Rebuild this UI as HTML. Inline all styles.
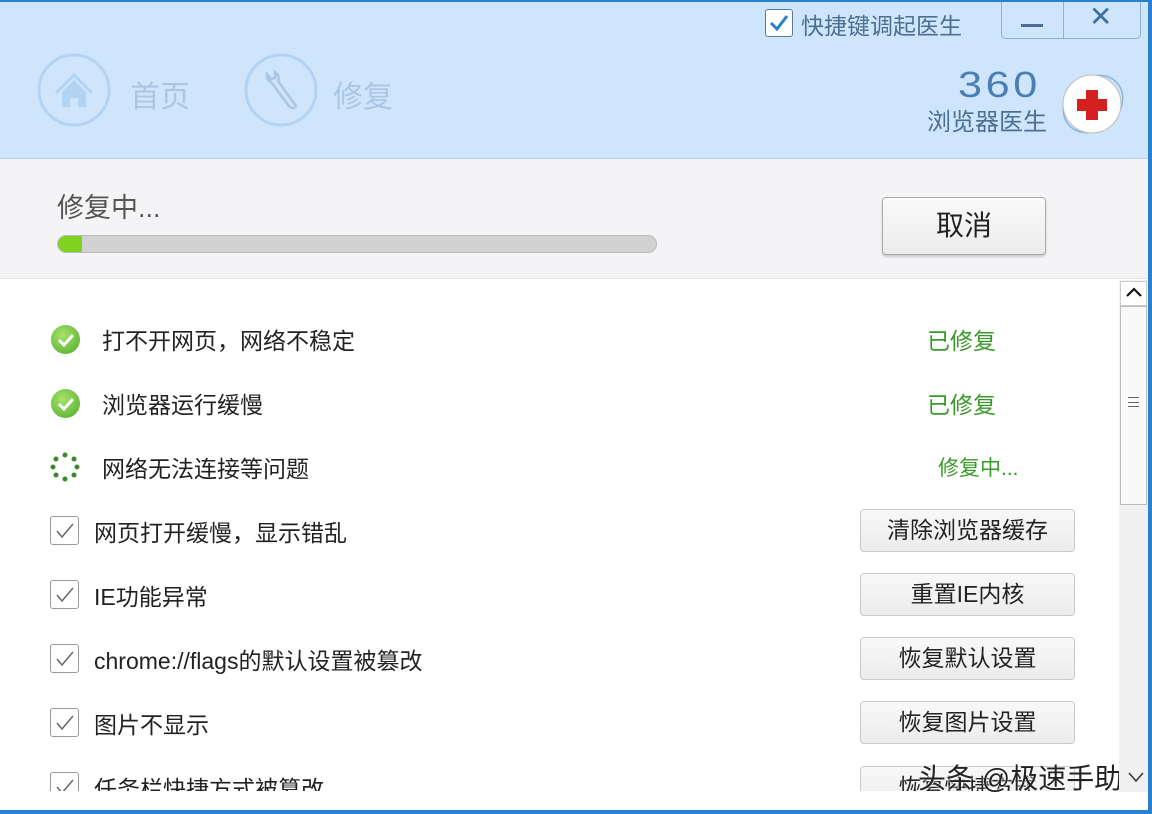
<!DOCTYPE html>
<html><head><meta charset="utf-8"><style>
*{margin:0;padding:0;box-sizing:border-box}
body{width:1152px;height:814px;overflow:hidden;background:#fff;font-family:"Liberation Sans","Noto Sans CJK SC",sans-serif;position:relative}
.abs{position:absolute}
.hdr{left:0;top:0;width:1152px;height:159px;background:#cfe5fb;border-top:2px solid #2a7fd0;border-bottom:1px solid #b8d3ee}
.band{left:0;top:159px;width:1152px;height:120px;background:#f4f4f6;border-bottom:1px solid #e6e6e6}
.rb{right:0;top:0;width:4px;height:814px;background:#2a7fd0}
.bb{left:0;bottom:0;width:1152px;height:4px;background:#2a7fd0}
.t{color:#222;font-size:23px;white-space:nowrap}
.g{color:#3a9a2a;font-size:23px}
.btn{left:860px;width:215px;height:43px;border:1px solid #c9c9c9;border-radius:4px;background:linear-gradient(#f8f8f8,#ececec);font-size:23px;color:#222;text-align:center;line-height:41px}
.cb{left:50px;width:29px;height:29px;border:1px solid #9a9a9a;border-radius:3px;background:#fff}
.ok{left:51px;width:29px;height:29px;border-radius:50%;background:radial-gradient(circle at 40% 35%,#a6e46a,#4fa82a)}
</style></head><body>
<div class="abs hdr"></div>
<div class="abs band"></div>

<svg class="abs" style="left:34px;top:50px" width="80" height="80"><circle cx="40" cy="40" r="35" fill="none" stroke="#b3d3f2" stroke-width="3"/><path d="M22 43 L40 25 L58 43" fill="none" stroke="#b3d3f2" stroke-width="3"/><path d="M28 42 L40 30 L52 42 V57 H44 V48 H36 V57 H28Z" fill="#b3d3f2"/></svg>
<div class="abs" style="left:130px;top:72px;font-size:30px;color:#a9c6e2">首页</div>
<svg class="abs" style="left:240px;top:50px" width="82" height="80"><circle cx="41" cy="40" r="35" fill="none" stroke="#b3d3f2" stroke-width="3"/><path d="M27 24 Q26 30 31 32 L49 56 Q53 60 56 56 L38 31 Q40 26 35 22 L35 28 L31 29 Z" fill="none" stroke="#a9c6e2" stroke-width="2.5"/></svg>
<div class="abs" style="left:333px;top:72px;font-size:30px;color:#a9c6e2">修复</div>

<div class="abs" style="left:765px;top:9px;width:28px;height:28px;border:1px solid #5a7a9a;border-radius:3px;background:#fff"></div>
<svg class="abs" style="left:767px;top:11px" width="24" height="24"><path d="M4 12 L10 18 L20 5" fill="none" stroke="#2a7fd0" stroke-width="3"/></svg>
<div class="abs" style="left:801px;top:7px;font-size:23px;color:#4d6f90">快捷键调起医生</div>
<div class="abs" style="left:1001px;top:2px;width:140px;height:37px;border:1px solid #8fb0cf;border-top:none;border-radius:0 0 5px 5px"></div>
<div class="abs" style="left:1063px;top:2px;width:1px;height:37px;background:#8fb0cf"></div>
<div class="abs" style="left:1021px;top:24px;width:22px;height:3px;background:#4a6f92"></div>
<div class="abs" style="left:1089px;top:0px;font-size:28px;color:#3d6e9e">✕</div>
<div class="abs" style="left:958px;top:64px;font-size:36px;color:#4a7fb6;letter-spacing:3px;transform:scaleX(1.2);transform-origin:left">360</div>
<div class="abs" style="left:927px;top:102px;font-size:24px;color:#4d6f90">浏览器医生</div>
<svg class="abs" style="left:1056px;top:68px" width="70" height="70"><ellipse cx="37" cy="36" rx="32" ry="26" fill="none" stroke="#8ab6de" stroke-width="1.5" transform="rotate(-40 37 36)"/><circle cx="36" cy="36" r="29" fill="#fff" stroke="#bbb"/><path d="M30 22h12v9h9v12h-9v9H30v-9h-9V31h9z" fill="#d42020"/></svg>

<div class="abs" style="left:57px;top:186px;font-size:27px;color:#555">修复中...</div>
<div class="abs" style="left:57px;top:235px;width:600px;height:18px;background:#d2d2d2;border-radius:9px;border:1px solid #bbb"></div>
<div class="abs" style="left:58px;top:236px;width:24px;height:16px;background:#7fd21f;border-radius:8px 0 0 8px"></div>
<div class="abs" style="left:882px;top:197px;width:164px;height:58px;border:1px solid #aaa;border-radius:4px;background:linear-gradient(#fafafa,#ececec);box-shadow:0 2px 2px #ccc;font-size:28px;text-align:center;line-height:56px;color:#222">取消</div>

<div class="abs ok" style="top:325px"></div><svg class="abs" style="left:51px;top:325px" width="29" height="29"><path d="M8 15 L13 20 L22 10" fill="none" stroke="#fff" stroke-width="3"/></svg>
<div class="abs t" style="left:102px;top:322px">打不开网页，网络不稳定</div>
<div class="abs g" style="left:927px;top:322px">已修复</div>
<div class="abs ok" style="top:389px"></div><svg class="abs" style="left:51px;top:389px" width="29" height="29"><path d="M8 15 L13 20 L22 10" fill="none" stroke="#fff" stroke-width="3"/></svg>
<div class="abs t" style="left:102px;top:386px">浏览器运行缓慢</div>
<div class="abs g" style="left:927px;top:386px">已修复</div>
<svg class="abs" style="left:49px;top:451px" width="32" height="32" fill="#3a8a2a"><circle cx="16" cy="4" r="2.5"/><circle cx="25" cy="8" r="2.5"/><circle cx="28" cy="16" r="2.5"/><circle cx="25" cy="24" r="2.5"/><circle cx="16" cy="28" r="2.5"/><circle cx="7" cy="24" r="2.5"/><circle cx="4" cy="16" r="2.5"/><circle cx="7" cy="8" r="2.5"/></svg>
<div class="abs t" style="left:102px;top:450px">网络无法连接等问题</div>
<div class="abs g" style="left:938px;top:452px;font-size:21px">修复中...</div>

<div class="abs cb" style="top:516px"></div><svg class="abs" style="left:50px;top:516px" width="29" height="29"><path d="M7 15 L12 21 L23 8" fill="none" stroke="#666" stroke-width="1.5"/></svg>
<div class="abs t" style="left:94px;top:514px">网页打开缓慢，显示错乱</div>
<div class="abs btn" style="top:509px">清除浏览器缓存</div>
<div class="abs cb" style="top:580px"></div><svg class="abs" style="left:50px;top:580px" width="29" height="29"><path d="M7 15 L12 21 L23 8" fill="none" stroke="#666" stroke-width="1.5"/></svg>
<div class="abs t" style="left:94px;top:578px">IE功能异常</div>
<div class="abs btn" style="top:573px">重置IE内核</div>
<div class="abs cb" style="top:644px"></div><svg class="abs" style="left:50px;top:644px" width="29" height="29"><path d="M7 15 L12 21 L23 8" fill="none" stroke="#666" stroke-width="1.5"/></svg>
<div class="abs t" style="left:94px;top:642px">chrome://flags的默认设置被篡改</div>
<div class="abs btn" style="top:637px">恢复默认设置</div>
<div class="abs cb" style="top:708px"></div><svg class="abs" style="left:50px;top:708px" width="29" height="29"><path d="M7 15 L12 21 L23 8" fill="none" stroke="#666" stroke-width="1.5"/></svg>
<div class="abs t" style="left:94px;top:706px">图片不显示</div>
<div class="abs btn" style="top:701px">恢复图片设置</div>
<div class="abs" style="left:0;top:765px;width:1120px;height:26px;overflow:hidden">
 <div class="abs cb" style="top:7px"></div>
 <svg class="abs" style="left:50px;top:7px" width="29" height="29"><path d="M7 15 L12 21 L23 8" fill="none" stroke="#666" stroke-width="1.5"/></svg>
 <div class="abs t" style="left:94px;top:5px">任务栏快捷方式被篡改</div>
 <div class="abs btn" style="top:1px">恢复快捷方式</div>
</div>
<div class="abs" style="left:0;top:791px;width:1148px;height:20px;background:#fff"></div>
<div class="abs" style="left:918px;top:757px;font-size:28px;color:#222;text-shadow:0 0 2px #fff,0 0 2px #fff">头条 @极速手助</div>

<div class="abs" style="left:1119px;top:280px;width:29px;height:512px;background:#f0f0f0"></div>
<div class="abs" style="left:1120px;top:281px;width:27px;height:25px;background:#fff;border:1px solid #ccc"></div>
<svg class="abs" style="left:1124px;top:285px" width="20" height="16"><path d="M3 11 L10 4 L17 11" fill="none" stroke="#111" stroke-width="2.2"/></svg>
<div class="abs" style="left:1120px;top:306px;width:27px;height:199px;background:#f9f9f9;border:1px solid #bbb"></div>
<div class="abs" style="left:1128px;top:397px;width:11px;height:10px;border-top:1px solid #666;border-bottom:1px solid #666"></div>
<div class="abs" style="left:1128px;top:402px;width:11px;height:1px;background:#666"></div>
<svg class="abs" style="left:1127px;top:770px" width="18" height="14"><path d="M2 3 L9 11 L16 3" fill="none" stroke="#333" stroke-width="1.5"/></svg>

<div class="abs rb"></div>
<div class="abs bb"></div>
</body></html>
